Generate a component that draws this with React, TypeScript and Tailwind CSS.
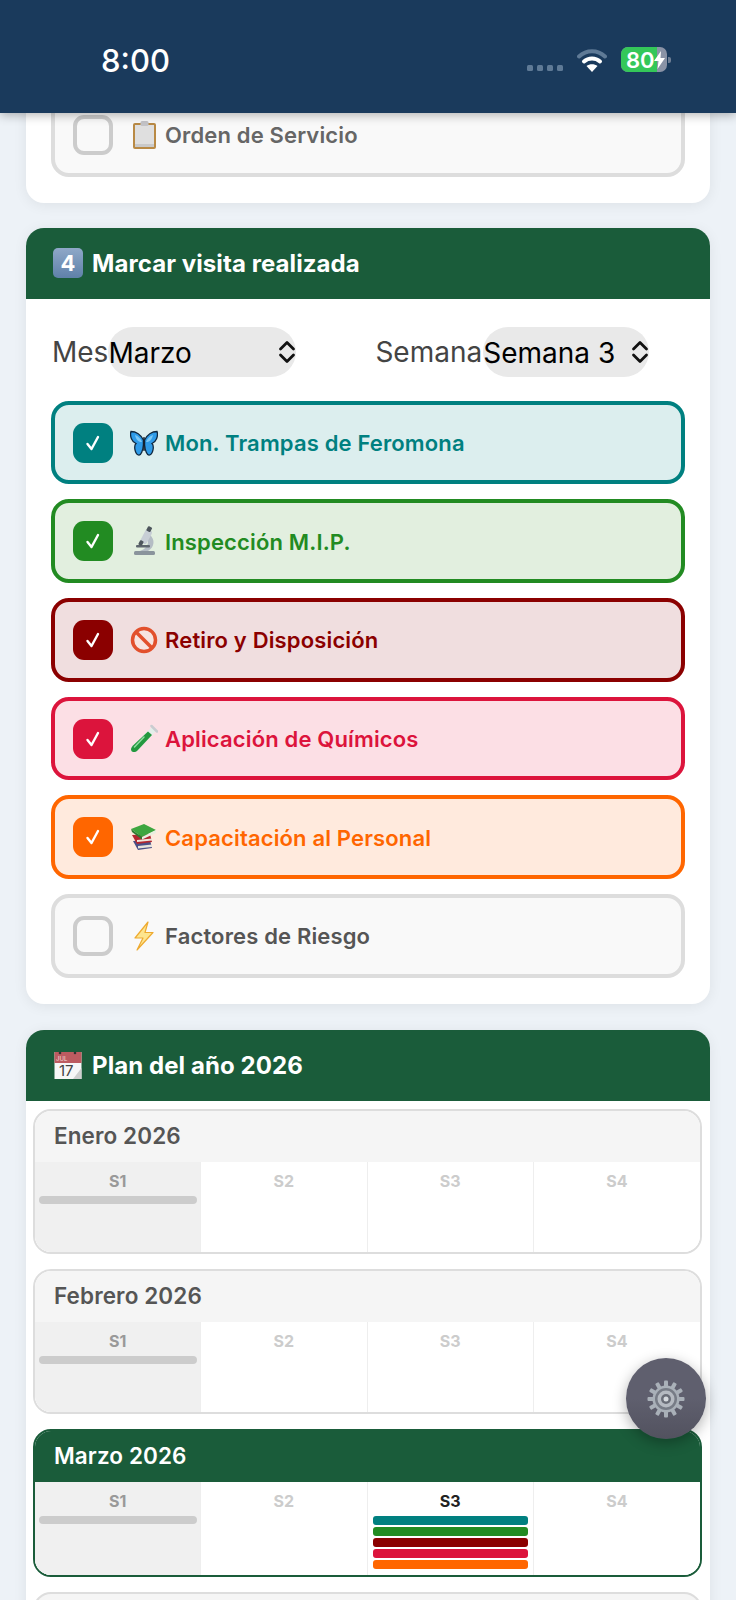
import React from 'react';

// Emoji are drawn by hand, the sandbox has no colour emoji font
const Clipboard = () => (
  <svg width="28" height="30" viewBox="0 0 28 30">
    <rect x="3" y="3" width="23" height="26" rx="2" fill="#b98a45" />
    <rect x="5" y="5" width="19" height="22" fill="#dfdfdf" />
    <rect x="5" y="24" width="19" height="3" fill="#c9c9c9" />
    <rect x="10.500" y="1" width="8" height="5" rx="1.500" fill="#c4c4c8" />
  </svg>
);

const Butterfly = () => (
  <svg width="28" height="28" viewBox="0 0 28 28">
    <path d="M13.400 11C11 6 6 2.500 1 2.500C-0.500 7 2 13 6 14.500C3.500 17 5 25 8.500 26C11 27 13 21 13.400 16Z" fill="#2f9be8" stroke="#10283f" strokeWidth="1.300" />
    <path d="M14.600 11C17 6 22 2.500 27 2.500C28.500 7 26 13 22 14.500C24.500 17 23 25 19.500 26C17 27 15 21 14.600 16Z" fill="#2f9be8" stroke="#10283f" strokeWidth="1.300" />
    <path d="M5 6C8 7 11 10 12 13C9 13.500 6 11 5 6ZM23 6C20 7 17 10 16 13C19 13.500 22 11 23 6Z" fill="#7cc8f5" />
    <rect x="13.200" y="8" width="1.600" height="14" rx="0.800" fill="#14202c" />
  </svg>
);

const Microscope = () => (
  <svg width="28" height="30" viewBox="0 0 28 30">
    <rect x="4" y="25" width="21" height="4" rx="1.500" fill="#8a949c" />
    <path d="M20 9C25 13 25 21 18 25H10C16 23 20 18 17 12Z" fill="#b4bcc4" />
    <rect x="6" y="19" width="14" height="2.500" rx="1" fill="#5e666e" />
    <rect x="13" y="3" width="7" height="15" rx="2.500" transform="rotate(28 16 10)" fill="#c7ced5" />
    <rect x="17" y="0.500" width="4.500" height="5" rx="1" transform="rotate(28 19 3)" fill="#4d555c" />
    <rect x="9" y="14.500" width="4" height="5" rx="1" transform="rotate(28 11 17)" fill="#4d555c" />
  </svg>
);

const NoEntry = () => (
  <svg width="28" height="28" viewBox="0 0 28 28">
    <circle cx="14" cy="14" r="11.500" fill="#f7e4e0" stroke="#e2502c" strokeWidth="3.500" />
    <path d="M6 6L22 22" stroke="#e2502c" strokeWidth="3.500" />
  </svg>
);

const TestTube = () => (
  <svg width="28" height="30" viewBox="0 0 28 30">
    <path d="M22 3L26 7L7.500 26.500C5.500 28.500 2.500 28.500 1.500 27C0.500 25.500 1 23.500 3 21.500Z" fill="#e4eeea" />
    <path d="M18 7.500L22 11L7.500 26.500C5.500 28.500 2.500 28.500 1.500 27C0.500 25.500 1 23.500 3 21.500Z" fill="#23983f" />
    <path d="M14 13L4.500 23" stroke="#8fdca0" strokeWidth="1.500" strokeLinecap="round" />
    <path d="M21.500 2L27 7.500" stroke="#c9ccd0" strokeWidth="2.500" strokeLinecap="round" />
  </svg>
);

const Books = () => (
  <svg width="28" height="28" viewBox="0 0 28 28">
    <path d="M3 18L20 17L22 25L8 27Z" fill="#4a4f86" />
    <path d="M8 23L22 21.500V24L8 25.500Z" fill="#e6e3dc" />
    <path d="M2 12L20 11L22 19L7 21Z" fill="#b3262f" />
    <path d="M7 17L22 15.500V17.500L7 19Z" fill="#eee6dc" />
    <path d="M1 6L14 1L26 7L12 14Z" fill="#3ea63f" />
    <path d="M1 6L12 14V16.500L2 9Z" fill="#2b7d31" />
    <path d="M12 14L26 7V10L12 16.500Z" fill="#e9efe0" />
  </svg>
);

const Bolt = () => (
  <svg width="28" height="30" viewBox="0 0 28 30">
    <path d="M18 1L5 17H13L7 29L23 11.500H15Z" fill="#fde58e" stroke="#eeaa30" strokeWidth="1.200" strokeLinejoin="round" />
  </svg>
);

const Keycap = () => (
  <div className="flex h-[30px] w-[30px] items-center justify-center rounded-[5px] bg-gradient-to-b from-[#8fa8c8] to-[#5f81a9] text-[22px] font-bold leading-none text-white">
    4
  </div>
);

const CalendarEmoji = () => (
  <svg width="28" height="28" viewBox="0 0 28 28">
    <rect x="0.500" y="1" width="27" height="27" fill="#f7f7f7" />
    <rect x="0.500" y="1" width="27" height="11" fill="#bd5b60" />
    <circle cx="6" cy="2" r="1.300" fill="#333" />
    <circle cx="21" cy="2" r="1.300" fill="#333" />
    <text x="2" y="10" fontSize="6" fill="#f4dcdc" fontFamily="Inter, sans-serif">JUL</text>
    <text x="5" y="25" fontSize="15" fill="#444" fontFamily="Inter, sans-serif">17</text>
    <path d="M27.500 17L19 28H27.500Z" fill="#cfcfcf" />
  </svg>
);

// Twelve teeth round a grey hub
const GearEmoji = () => (
  <svg width="38" height="38" viewBox="0 0 38 38">
    <g fill="#a9b0b8">
      {Array.from({ length: 12 }).map((_, i) => (
        <rect key={i} x="17" y="0.500" width="4" height="7" rx="1" transform={`rotate(${i * 30} 19 19)`} />
      ))}
    </g>
    <circle cx="19" cy="19" r="13.500" fill="#a9b0b8" />
    <circle cx="19" cy="19" r="11" fill="#777c86" />
    <circle cx="19" cy="19" r="8.500" fill="#b5bac1" />
    <circle cx="19" cy="19" r="5" fill="#6a6e78" />
    <circle cx="19" cy="19" r="2.500" fill="#d6dade" />
  </svg>
);

const Chevrons = () => (
  <svg width="18" height="24" viewBox="0 0 18 24" fill="none" stroke="#111" strokeWidth="2.800" strokeLinecap="round" strokeLinejoin="round">
    <path d="M2.500 9L9 2.500L15.500 9" />
    <path d="M2.500 15L9 21.500L15.500 15" />
  </svg>
);

const Check = () => (
  <svg width="18" height="18" viewBox="0 0 18 18" fill="none" stroke="#fff" strokeWidth="2.400" strokeLinecap="round" strokeLinejoin="round">
    <path d="M3.500 10L7.500 15L14 3" />
  </svg>
);

const visits = [
  { label: 'Mon. Trampas de Feromona', icon: <Butterfly />, row: 'border-[#008080] bg-[#dceeee]', box: 'bg-[#008080]', text: 'text-[#008080]' },
  { label: 'Inspección M.I.P.', icon: <Microscope />, row: 'border-[#228b22] bg-[#e2efdf]', box: 'bg-[#228b22]', text: 'text-[#228b22]' },
  { label: 'Retiro y Disposición', icon: <NoEntry />, row: 'border-[#8b0000] bg-[#f0dedf]', box: 'bg-[#8b0000]', text: 'text-[#8b0000]' },
  { label: 'Aplicación de Químicos', icon: <TestTube />, row: 'border-[#dc143c] bg-[#fcdfe5]', box: 'bg-[#dc143c]', text: 'text-[#dc143c]' },
  { label: 'Capacitación al Personal', icon: <Books />, row: 'border-[#ff6600] bg-[#ffeadd]', box: 'bg-[#ff6600]', text: 'text-[#ff6600]' },
];

const VisitRow = ({ label, icon, row, box, text }: { label: string; icon: React.ReactNode; row: string; box?: string; text: string }) => (
  <div className={`flex h-[83.7px] shrink-0 items-center rounded-[18px] border-[4px] pl-[18px] ${row}`}>
    {box ? (
      <div className={`flex h-[40px] w-[40px] items-center justify-center rounded-[11px] ${box}`}>
        <Check />
      </div>
    ) : (
      <div className="h-[40px] w-[40px] rounded-[11px] border-[4px] border-[#cccccc]" />
    )}
    <div className="ml-[17px] flex w-[28px] justify-center">{icon}</div>
    <span className={`ml-[7px] mt-[1px] text-[22px] font-semibold leading-none tracking-[0.15px] ${text}`}>{label}</span>
  </div>
);

const planBars = ['bg-[#008080]', 'bg-[#228b22]', 'bg-[#8b0000]', 'bg-[#dc143c]', 'bg-[#ff6600]'];

const WeekCell = ({ name, past, active, last }: { name: string; past?: boolean; active?: boolean; last?: boolean }) => (
  <div className={`flex min-h-[90px] flex-col px-[3.5px] ${last ? '' : 'border-r border-[#eeeeee]'} ${past ? 'bg-[#f0f0f0]' : ''}`}>
    <div className={`mt-[9px] h-[20px] text-center text-[16px] font-bold leading-[20px] ${active ? 'text-[#222222]' : past ? 'text-[#999999]' : 'text-[#cccccc]'}`}>
      {name}
    </div>
    {past && <div className="mt-[5px] h-[8px] rounded-[4px] bg-[#cccccc]" />}
    {active && (
      <div className="mb-[6px] mt-[5px] flex flex-col gap-[2px] px-[1.5px]">
        {planBars.map((bar) => (
          <div key={bar} className={`h-[9px] rounded-[3px] ${bar}`} />
        ))}
      </div>
    )}
  </div>
);

const MonthCard = ({ name, current }: { name: string; current?: boolean }) => (
  <div className={`shrink-0 overflow-hidden rounded-[18px] border-[2.5px] ${current ? 'border-[#1a5c3a]' : 'border-[#dddddd]'}`}>
    <div className={`flex h-[51px] items-center pl-[19px] text-[22.5px] font-semibold leading-none tracking-[0.1px] ${current ? 'bg-[#1a5c3a] text-white' : 'bg-[#f5f5f5] text-[#555555]'}`}>
      {name}
    </div>
    <div className="grid grid-cols-4 bg-white">
      <WeekCell name="S1" past />
      <WeekCell name="S2" />
      <WeekCell name="S3" active={current} />
      <WeekCell name="S4" last />
    </div>
  </div>
);

const SectionHeader = ({ icon, title }: { icon: React.ReactNode; title: string }) => (
  <div className="flex h-[71px] items-center rounded-t-[18px] bg-[#1a5c3a] pl-[27px]">
    <div className="flex w-[30px] justify-center">{icon}</div>
    <span className="ml-[9px] mt-[2px] text-[24px] font-bold leading-none tracking-[0.08px] text-white">{title}</span>
  </div>
);

const App = () => {
  return (
    <div className="relative flex h-[1600px] w-[736px] flex-col overflow-hidden bg-[#edf2f7] font-['Inter',sans-serif]">
      {/* Status bar */}
      <header className="relative z-10 flex h-[113px] shrink-0 items-center bg-[#1a3a5c] pl-[101px] shadow-[0_2px_10px_rgba(0,0,0,0.3)]">
        <span className="mt-[8px] text-[31px] font-medium leading-none text-white">8:00</span>
        <div className="ml-auto mr-[65px] mt-[6px] flex items-center">
          <div className="mt-[16px] flex gap-[4px]">
            <div className="h-[6px] w-[6px] rounded-[1.5px] bg-[#5f7a96]" />
            <div className="h-[6px] w-[6px] rounded-[1.5px] bg-[#5f7a96]" />
            <div className="h-[6px] w-[6px] rounded-[1.5px] bg-[#5f7a96]" />
            <div className="h-[6px] w-[6px] rounded-[1.5px] bg-[#5f7a96]" />
          </div>
          <svg className="ml-[14px]" width="30" height="24" viewBox="0 0 30 24" fill="none">
            <path d="M2 8.500C9.500 1.500 20.500 1.500 28 8.500" stroke="#5f7a96" strokeWidth="4" strokeLinecap="round" />
            <path d="M7 13.500C11.500 9.500 18.500 9.500 23 13.500" stroke="#fff" strokeWidth="4" strokeLinecap="round" />
            <path d="M15 24L9.500 18C12.500 15.500 17.500 15.500 20.500 18Z" fill="#fff" />
          </svg>
          <div className="relative ml-[14px] flex h-[25px] w-[46px] items-center overflow-hidden rounded-[7px] bg-[#8a93a6]">
            <div className="h-full w-[36px] bg-[#34c759]" />
            <span className="absolute left-[5px] text-[22px] font-semibold leading-none text-white">80</span>
            <svg className="absolute left-[33px]" width="11" height="18" viewBox="0 0 11 18">
              <path d="M7 0L0 10H4.500L3.500 18L11 7H6.500Z" fill="#fff" />
            </svg>
          </div>
          <div className="ml-[1px] h-[6px] w-[3px] rounded-r-[2px] bg-[#6f7f95]" />
        </div>
      </header>

      <main className="flex flex-col gap-[25px] px-[26px]">
        {/* Previous section, scrolled under the status bar */}
        <section className="-mt-[20px] rounded-b-[18px] bg-white px-[25px] pb-[26px] shadow-[0_2px_14px_rgba(0,0,0,0.07)]">
          <VisitRow label="Orden de Servicio" icon={<Clipboard />} row="border-[#dddddd] bg-[#f9f9f9]" text="text-[#666666]" />
        </section>

        <section className="rounded-[18px] bg-white shadow-[0_2px_14px_rgba(0,0,0,0.07)]">
          <SectionHeader icon={<Keycap />} title="Marcar visita realizada" />
          <div className="px-[25px] pb-[26px]">
            <div className="ml-[1px] mt-[28px] flex h-[50px] items-center gap-[79px]">
              <div className="flex items-center">
                <span className="text-[28px] leading-none text-[#444444]">Mes</span>
                <div className="flex h-[50px] w-[188px] items-center justify-between rounded-full bg-[#e9e9e9]">
                  <span className="mt-[3px] text-[28px] leading-none text-black">Marzo</span>
                  <Chevrons />
                </div>
              </div>
              <div className="flex items-center">
                <span className="text-[28px] leading-none text-[#444444]">Semana</span>
                <div className="ml-[1px] flex h-[50px] w-[166px] items-center justify-between rounded-full bg-[#e9e9e9]">
                  <span className="mt-[3px] text-[28px] leading-none text-black">Semana 3</span>
                  <Chevrons />
                </div>
              </div>
            </div>
            <div className="mt-[24px] flex flex-col gap-[15px]">
              {visits.map((v) => (
                <VisitRow key={v.label} {...v} />
              ))}
              <VisitRow label="Factores de Riesgo" icon={<Bolt />} row="border-[#dddddd] bg-[#f9f9f9]" text="text-[#555555]" />
            </div>
          </div>
        </section>

        <section className="mt-[1px] rounded-[18px] bg-white shadow-[0_2px_14px_rgba(0,0,0,0.07)]">
          <SectionHeader icon={<CalendarEmoji />} title="Plan del año 2026" />
          <div className="flex flex-col gap-[15px] pb-[16px] pl-[7px] pr-[8px] pt-[8px]">
            <MonthCard name="Enero 2026" />
            <MonthCard name="Febrero 2026" />
            <MonthCard name="Marzo 2026" current />
            {/* Only the top edge of the next month is on screen */}
            <div className="h-[40px] shrink-0 rounded-t-[18px] border-[2.5px] border-[#dddddd] bg-[#f5f5f5]" />
          </div>
        </section>
      </main>

      {/* Settings button floating over the page */}
      <button className="absolute left-[626px] top-[1358px] z-20 flex h-[81px] w-[80px] items-center justify-center rounded-full bg-gradient-to-b from-[#5f5f6e] via-[#5f5f6e] to-[#52525f] shadow-[0_4px_14px_rgba(0,0,0,0.3)]">
        <GearEmoji />
      </button>
    </div>
  );
};

export default App;
